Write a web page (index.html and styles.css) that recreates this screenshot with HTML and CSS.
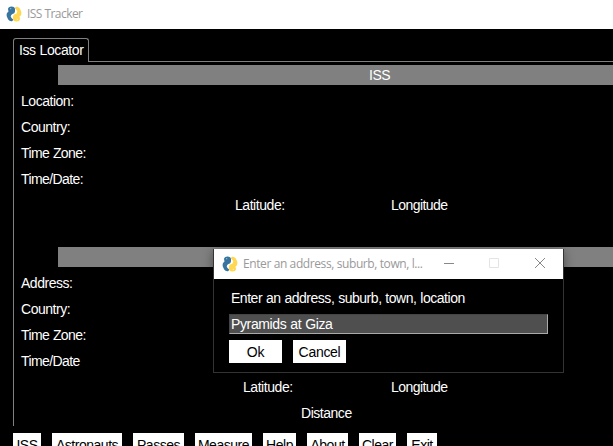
FILE: index.html
```html
<!DOCTYPE html>
<html lang="en">
<head>
<meta charset="utf-8">
<title>ISS Tracker</title>
<link rel="stylesheet" href="styles.css">
</head>
<body>
<svg class="defs" width="0" height="0">
  <symbol id="python" viewBox="0 0 16 16">
    <path fill="#37759f" d="M2 3Q2.300.5 5.500.5 8.800.5 9 3V5.500Q8.800 7.600 6.500 8 4.800 8.500 4.700 10.500L5.500 12 7.200 13.500 6.500 15Q3.800 15.800 2.200 13.500L.8 10.500Q0 7 2.500 5.500z"/>
    <path fill="#ffd750" d="M14 13Q13.700 15.500 10.500 15.500 7.200 15.500 7 13V10.500Q7.200 8.400 9.500 8 11.200 7.500 11.300 5.500L10.500 4 8.900 2.500 9.500 1Q12.200.2 13.800 2.500L15.200 5.500Q16 9 13.500 10.500z"/>
    <circle cx="4.700" cy="2.700" r=".6" fill="#a5c4de"/>
    <circle cx="11.300" cy="13.300" r=".6" fill="#fff0b8"/>
  </symbol>
</svg>
<div class="window">
  <header class="titlebar"><svg class="logo"><use href="#python"/></svg><span class="title">ISS Tracker</span></header>
  <main class="content">
    <div class="tabs"><div class="tab">Iss Locator</div><div class="tabline"></div></div>
    <div class="panel">
      <div class="row"><div class="bar">ISS</div></div>
      <div class="row">Location:</div>
      <div class="row">Country:</div>
      <div class="row tight">Time Zone:</div>
      <div class="row tight">Time/Date:</div>
      <div class="row coords"><span class="lat">Latitude:</span><span>Longitude</span></div>
      <div class="row"></div>
      <div class="row"><div class="bar"></div></div>
      <div class="row">Address:</div>
      <div class="row">Country:</div>
      <div class="row tight">Time Zone:</div>
      <div class="row tight">Time/Date</div>
      <div class="row coords second"><span class="lat">Latitude:</span><span>Longitude</span></div>
      <div class="row distance">Distance</div>
    </div>
    <nav class="actions">
      <button class="w-iss">ISS</button><button class="w-astronauts">Astronauts</button><button class="w-passes">Passes</button><button class="w-measure">Measure</button><button class="w-help">Help</button><button class="w-about">About</button><button class="w-clear">Clear</button><button class="w-exit">Exit</button>
    </nav>
  </main>
</div>
<section class="dialog">
  <header class="dialog-title">
    <svg class="logo"><use href="#python"/></svg><span class="title">Enter an address, suburb, town, l...</span>
    <svg class="controls" viewBox="0 0 102 12" fill="none">
      <path stroke="#888" d="M0 5.500h10"/>
      <path stroke="#e4e4e4" d="M45.500 .5h9v9h-9z"/>
      <path stroke="#888" d="M91 0l10 10M101 0L91 10"/>
    </svg>
  </header>
  <div class="dialog-body">
    <label class="prompt">Enter an address, suburb, town, location</label>
    <div class="field">Pyramids at Giza</div>
    <div class="choices"><button>Ok</button><button>Cancel</button></div>
  </div>
</section>
</body>
</html>
```
FILE: styles.css
```css
* { box-sizing: border-box; }
body {
  margin: 0;
  width: 613px;
  height: 446px;
  overflow: hidden;
  background: #000;
  color: #fff;
  font: 14px/16px "Liberation Sans", Arial, sans-serif;
  letter-spacing: -0.47px;
  word-spacing: 0.4px;
}
.defs { position: absolute; }
.window { height: 446px; overflow: hidden; }
.titlebar {
  display: flex;
  align-items: center;
  height: 29px;
  padding: 0 0 2px 6px;
  background: #fff;
}
.logo { width: 16px; height: 16px; flex: none; }
.title {
  margin-left: 5px;
  color: #999;
  font: 12px/16px "Open Sans", "Noto Sans", sans-serif;
  letter-spacing: -0.4px;
  word-spacing: 0;
  white-space: nowrap;
}
.titlebar .title { letter-spacing: -0.55px; padding-top: 1px; }
.content { padding: 9px 0 0 13px; }
.tabs { display: flex; height: 24px; }
.tab {
  width: 76px;
  padding: 3px 0 0 5px;
  border: 1px solid #808080;
  border-bottom: 0;
  border-radius: 3px 3px 0 0;
  letter-spacing: -0.4px;
  white-space: nowrap;
}
.tabline { flex: 1; border-bottom: 1px solid #808080; }
.panel { height: 364px; border-left: 1px solid #808080; }
.row { display: flex; align-items: center; height: 26px; padding-left: 7px; }
.tight { letter-spacing: -0.6px; }
.bar {
  flex: 1;
  height: 20px;
  margin-left: 37px;
  padding-left: 311px;
  background: #808080;
  line-height: 20px;
}
.coords { padding-left: 221px; letter-spacing: -0.55px; }
.coords .lat { width: 156px; letter-spacing: -0.45px; }
.second { padding-left: 229px; }
.second .lat { width: 148px; }
.distance { padding-left: 287px; }
button {
  height: 23px;
  padding: 0;
  border: 0;
  background: #fff;
  color: #000;
  font: inherit;
  letter-spacing: inherit;
  line-height: 23px;
  text-align: center;
  white-space: nowrap;
}
.actions { display: flex; gap: 11px; margin-top: 7px; }
.actions button { line-height: 25px; }
.w-iss { width: 28px; }
.w-astronauts { width: 70px; }
.w-passes { width: 51px; }
.w-measure { width: 57px; }
.w-help { width: 33px; }
.w-about { width: 41px; }
.w-clear { width: 37px; }
.w-exit { width: 30px; }
.dialog {
  position: absolute;
  left: 213px;
  top: 249px;
  width: 351px;
  height: 124px;
  border: 1px solid #333;
  border-top: 0;
  background: #000;
  box-shadow: 0 2px 10px rgba(0, 0, 0, 0.4);
}
.dialog-title {
  display: flex;
  align-items: center;
  height: 30px;
  padding: 0 17px 1px 8px;
  background: #fff;
}
.controls { width: 102px; height: 12px; margin-left: auto; }
.dialog-body { padding: 11px 15px 0; }
.prompt { display: block; padding-left: 2px; }
.field {
  width: 319px;
  height: 20px;
  margin-top: 8px;
  padding: 1px;
  border: 1px solid #444;
  border-right-color: #aaa;
  border-bottom-color: #aaa;
  background: #4f4f4f;
  letter-spacing: -0.37px;
}
.choices { display: flex; gap: 11px; margin-top: 6px; }
.choices button { width: 53px; line-height: 25px; letter-spacing: -0.3px; }
```
